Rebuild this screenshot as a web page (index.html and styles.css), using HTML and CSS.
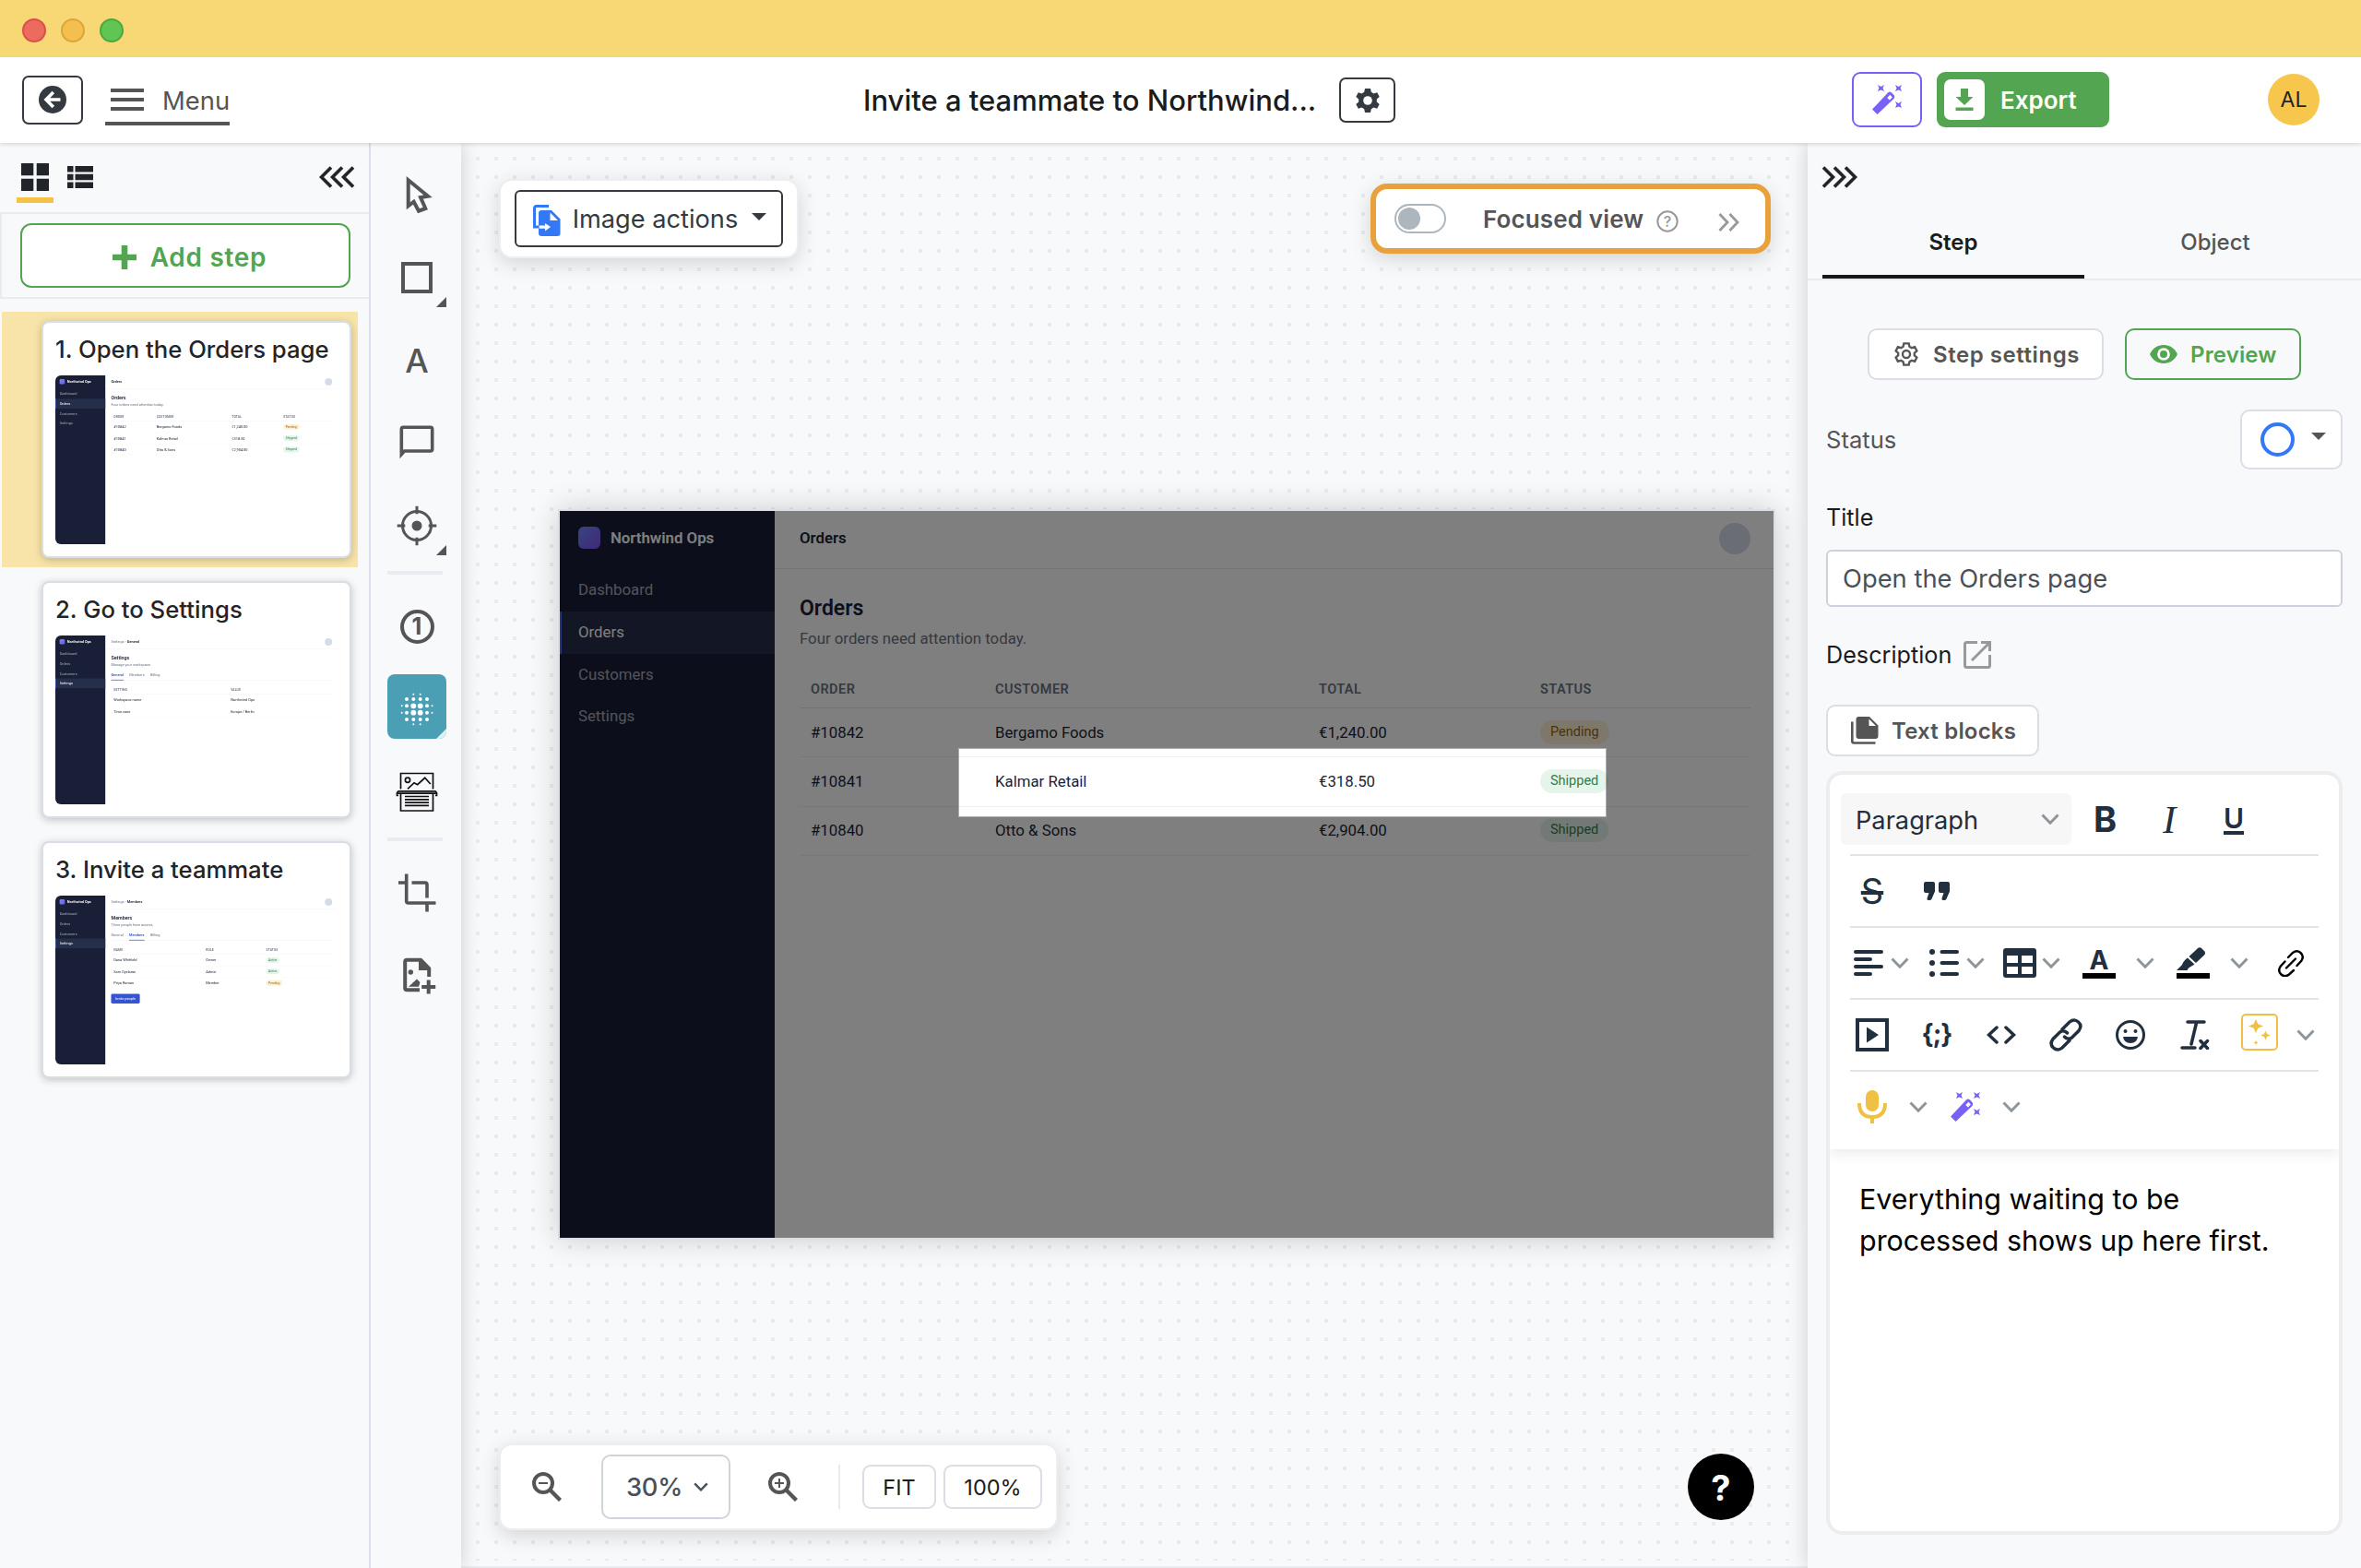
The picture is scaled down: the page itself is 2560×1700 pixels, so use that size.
FILE: index.html
```html
<!DOCTYPE html>
<html lang="en">
<head>
<meta charset="utf-8">
<title>Invite a teammate to Northwind</title>
<link rel="stylesheet" href="styles.css">
</head>
<body>
<svg width="0" height="0" class="defs">
  <symbol id="chev" viewBox="0 0 20 12"><path d="M1.500 1.500 10 10.200 18.500 1.500" fill="none" stroke="currentColor" stroke-width="3"/></symbol>
  <symbol id="wand" viewBox="0 0 32 32"><path d="M0 26.500 17 8.500Q19 6.500 21 8.500L23.500 11Q25 13 23.500 15L5.500 32z" fill="currentColor"/><path d="m16.300 14 3-3.200 2.600 2.600-3 3.200z" fill="#fff"/><path d="m6 0 3.500 2L13 0l-1.500 3.500L13 7 9.500 5.500 6 7l1.500-3.500zM25 0l3.500 2L32 0l-1.500 3.500L32 7l-3.500-1.500L25 7l1.500-3.500zM25 18l3.500 2 3.500-2-1.500 3.500L32 25l-3.500-1.500L25 25l1.500-3.500z" fill="currentColor"/></symbol>
  <symbol id="gear" viewBox="0 0 26 28" overflow="visible"><path d="M10 1h6l.8 3.800 2.700 1.600 3.700-1.200 2.500 4.800-2.900 2.600v2.800l2.900 2.600-2.500 4.800-3.700-1.200-2.700 1.600L16 27h-6l-.8-3.800-2.700-1.600-3.700 1.200L.3 18l2.900-2.600v-2.800L.3 10l2.500-4.800 3.700 1.200 2.700-1.600z"/></symbol>
</svg>
<div class="titlebar"><i class="light red"></i><i class="light yellow"></i><i class="light green"></i></div>
<header class="header">
  <button class="back"><svg width="30" height="30" viewBox="0 0 30 30"><circle cx="15" cy="15" r="15" fill="#343a40"/><path d="M15.800 7 8 15l7.800 8M8.500 15H23.500" fill="none" stroke="#fff" stroke-width="3.600"/></svg></button>
  <div class="menu"><span class="burger"><i></i><i></i><i></i></span><span>Menu</span></div>
  <div class="doc"><h1>Invite a teammate to Northwind...</h1>
    <button class="docset"><svg width="26" height="28" fill="#343a40"><use href="#gear"/><circle cx="13" cy="14" r="4.800" fill="#fff"/></svg></button></div>
  <button class="magic"><svg width="32" height="32"><use href="#wand"/></svg></button>
  <button class="export"><span class="dl"><svg width="20" height="24" viewBox="0 0 20 24"><path d="M6 0h8v9h5.500L10 18 .5 9H6zM.5 20.500h19V24H.5z" fill="#54a551"/></svg></span><span>Export</span></button>
  <div class="avatar">AL</div>
</header>
<div class="body">
  <aside class="steps">
    <div class="views">
      <svg class="gridv" width="30" height="30" viewBox="0 0 30 30" fill="#212529"><path d="M0 0h13.300v13.300H0zM16.700 0H30v13.300H16.700zM0 16.700h13.300V30H0zM16.700 16.700H30V30H16.700z"/></svg>
      <svg class="listv" width="28" height="24" viewBox="0 0 28 24" fill="#212529"><path d="M0 0h6.500v6.600H0zM8.500 0H28v6.600H8.500zM0 8.700h6.500v6.600H0zM8.500 8.700H28v6.600H8.500zM0 17.400h6.500V24H0zM8.500 17.400H28V24H8.500z"/></svg>
      <svg class="fold" width="40" height="24" viewBox="0 0 40 24" fill="none" stroke="#212529" stroke-width="3.600"><path d="M13 1.500 2.500 12 13 22.500M25 1.500 14.500 12 25 22.500M37 1.500 26.500 12 37 22.500"/></svg>
    </div>
    <div class="addwrap"><button class="add"><svg width="26" height="26" viewBox="0 0 26 26"><path d="M9.700 0h6.600v9.700H26v6.600h-9.700V26H9.700v-9.700H0V9.700h9.700z" fill="#54a551"/></svg><span>Add step</span></button></div>
    <div class="step on"><div class="card"><h2>1. Open the Orders page</h2><div class="thumb"><div class="app">
      <nav class="side"><div class="brand"><i></i><b>Northwind Ops</b></div><a>Dashboard</a><a class="cur">Orders</a><a>Customers</a><a>Settings</a></nav>
      <div class="main"><div class="bar"><b>Orders</b><i class="face"></i></div><div class="page"><h3>Orders</h3><p>Four orders need attention today.</p>
        <div class="tr th c4"><span>ORDER</span><span>CUSTOMER</span><span>TOTAL</span><span>STATUS</span></div>
        <div class="tr c4"><span>#10842</span><span>Bergamo Foods</span><span>€1,240.00</span><em class="pend">Pending</em></div>
        <div class="tr c4"><span>#10841</span><span>Kalmar Retail</span><span>€318.50</span><em>Shipped</em></div>
        <div class="tr c4"><span>#10840</span><span>Otto &amp; Sons</span><span>€2,904.00</span><em>Shipped</em></div>
      </div></div></div></div></div></div>
    <div class="step"><div class="card"><h2>2. Go to Settings</h2><div class="thumb"><div class="app">
      <nav class="side"><div class="brand"><i></i><b>Northwind Ops</b></div><a>Dashboard</a><a>Orders</a><a>Customers</a><a class="cur">Settings</a></nav>
      <div class="main"><div class="bar"><span>Settings › </span><b>General</b><i class="face"></i></div><div class="page"><h3>Settings</h3><p>Manage your workspace.</p>
        <div class="tabs"><b>General</b><span>Members</span><span>Billing</span></div>
        <div class="tr th c2"><span>SETTING</span><span>VALUE</span></div>
        <div class="tr c2"><span>Workspace name</span><span>Northwind Ops</span></div>
        <div class="tr c2"><span>Time zone</span><span>Europe / Berlin</span></div>
      </div></div></div></div></div></div>
    <div class="step"><div class="card"><h2>3. Invite a teammate</h2><div class="thumb"><div class="app">
      <nav class="side"><div class="brand"><i></i><b>Northwind Ops</b></div><a>Dashboard</a><a>Orders</a><a>Customers</a><a class="cur">Settings</a></nav>
      <div class="main"><div class="bar"><span>Settings › </span><b>Members</b><i class="face"></i></div><div class="page"><h3>Members</h3><p>Three people have access.</p>
        <div class="tabs"><span>General</span><b>Members</b><span>Billing</span></div>
        <div class="tr th c3"><span>NAME</span><span>ROLE</span><span>STATUS</span></div>
        <div class="tr c3"><span>Dana Whitfield</span><span>Owner</span><em>Active</em></div>
        <div class="tr c3"><span>Sam Oyelaran</span><span>Admin</span><em>Active</em></div>
        <div class="tr c3"><span>Priya Raman</span><span>Member</span><em class="pend">Pending</em></div>
        <button class="invite">Invite people</button>
      </div></div></div></div></div></div>
  </aside>
  <div class="tools">
    <div class="tool"><svg viewBox="0 0 48 48"><path d="M14.700 8.300 36 25.700l-8 1.300 5.300 12-7.300 2.700-5.300-10-6 4.600z"/></svg></div>
    <div class="tool more"><svg viewBox="0 0 48 48"><path d="M9 9h30v30H9z"/></svg></div>
    <div class="tool glyph">A</div>
    <div class="tool"><svg viewBox="0 0 48 48"><path d="M7.300 36.500V9.300a2 2 0 0 1 2-2H38.700a2 2 0 0 1 2 2V31a2 2 0 0 1-2 2H10.500z" stroke-width="3.600"/></svg></div>
    <div class="tool more"><svg viewBox="0 0 48 48"><circle cx="24" cy="24" r="15.500" stroke-width="3"/><circle cx="24" cy="24" r="5.500" class="solid"/><path d="M24 2.700v8.600M24 36.700v8.600M2.700 24h8.600M36.700 24h8.600" stroke-width="3"/></svg></div>
    <hr>
    <div class="tool one"><span>1</span></div>
    <div class="tool more blur"><svg viewBox="0 0 48 48"><g class="solid"><circle cx="20.300" cy="20.300" r="2.900"/><circle cx="27.700" cy="20.300" r="2.900"/><circle cx="20.300" cy="27.700" r="2.900"/><circle cx="27.700" cy="27.700" r="2.900"/><circle cx="13" cy="13" r="2"/><circle cx="20.300" cy="13" r="2"/><circle cx="27.700" cy="13" r="2"/><circle cx="35" cy="13" r="2"/><circle cx="13" cy="20.300" r="2"/><circle cx="35" cy="20.300" r="2"/><circle cx="13" cy="27.700" r="2"/><circle cx="35" cy="27.700" r="2"/><circle cx="13" cy="35" r="2"/><circle cx="20.300" cy="35" r="2"/><circle cx="27.700" cy="35" r="2"/><circle cx="35" cy="35" r="2"/><circle cx="20.300" cy="7.700" r="1"/><circle cx="27.700" cy="7.700" r="1"/><circle cx="20.300" cy="40.300" r="1"/><circle cx="27.700" cy="40.300" r="1"/><circle cx="7.700" cy="20.300" r="1"/><circle cx="7.700" cy="27.700" r="1"/><circle cx="40.500" cy="20.300" r="1"/><circle cx="40.500" cy="27.700" r="1"/></g></svg></div>
    <div class="tool scan"><svg viewBox="0 0 48 48"><path d="M6.500 21.500V4.500h35v17M14 21.300l7-6.600 3.700 2 8-7.400 6 6.700M4 28.500H2.500v-3l1.500-1.700h40l1.500 1.700v3H44M3.500 26.200h41M6.500 27v18h35V27M11 29.500h26M11 32.800h26M11 36.100h26M11 39.400h26"/><circle cx="14" cy="11.700" r="2.600"/></svg></div>
    <hr>
    <div class="tool"><svg viewBox="0 0 48 48"><path d="M12.700 3.500V33q0 2 2 2H44.500M4 13h8M18.500 13H33q2 0 2 2V29.500M35 35v9.500" stroke-width="3.600"/></svg></div>
    <div class="tool"><svg viewBox="0 0 48 48"><path d="M27 40.300H13.200q-2 0-2-2V9.700q0-2 2-2H28L37.200 17v9M36.700 29.500v15M29.200 37h15"/><path class="solid" d="M26 6h3l10 10.500V19H26zM15 36.700 24 28.500l3.500 3.500-1.500 4.700z"/><circle class="solid" cx="17.300" cy="21" r="2.700"/></svg></div>
  </div>
  <main class="canvas"><div class="dots"></div>
    <div class="imgact float"><button><svg width="30" height="34" viewBox="0 0 30 34"><path d="M17 1.500H3.500a2 2 0 0 0-2 2V24h5" fill="none" stroke="#3478f6" stroke-width="3"/><path d="M9 6h11l9.500 9.500V31a3 3 0 0 1-3 3H9a3 3 0 0 1-3-3V9a3 3 0 0 1 3-3z" fill="#3478f6"/><path d="M18.500 8.500V17H27zM6.500 22.500H13V20l6 4-6 4.500v-2.700H6.500z" fill="#fff"/></svg><span>Image actions</span><i class="caret"></i></button></div>
    <div class="focused"><i class="switch"></i><span>Focused view</span>
      <svg class="q" width="26" height="26" viewBox="0 0 26 26"><circle cx="13" cy="13" r="10.700" fill="none" stroke="#999" stroke-width="2"/><text x="13" y="18.800" text-anchor="middle">?</text></svg>
      <svg class="dbl" width="24" height="20" viewBox="0 0 24 20" fill="none" stroke="#999" stroke-width="2.800"><path d="M1.500 1 10 10l-8.500 9M12.500 1 21 10l-8.500 9"/></svg></div>
    <div class="shot"><div class="app">
      <nav class="side"><div class="brand"><i></i><b>Northwind Ops</b></div><a>Dashboard</a><a class="cur">Orders</a><a>Customers</a><a>Settings</a></nav>
      <div class="main"><div class="bar"><b>Orders</b><i class="face"></i></div><div class="page"><h3>Orders</h3><p>Four orders need attention today.</p>
        <div class="tr th c4"><span>ORDER</span><span>CUSTOMER</span><span>TOTAL</span><span>STATUS</span></div>
        <div class="tr c4"><span>#10842</span><span>Bergamo Foods</span><span>€1,240.00</span><em class="pend">Pending</em></div>
        <div class="tr c4"><span>#10841</span><span>Kalmar Retail</span><span>€318.50</span><em>Shipped</em></div>
        <div class="tr c4"><span>#10840</span><span>Otto &amp; Sons</span><span>€2,904.00</span><em>Shipped</em></div>
      </div></div></div><div class="spot"></div></div>
    <div class="zoombar float">
      <svg width="32" height="32" viewBox="0 0 32 32" fill="none" stroke="#555"><circle cx="12" cy="12" r="10" stroke-width="4"/><path d="m20 20 10.500 10.500" stroke-width="4.400"/><path d="M7 12h10" stroke-width="2"/></svg>
      <button class="pct"><span>30%</span><svg width="16" height="10"><use href="#chev"/></svg></button>
      <svg width="32" height="32" viewBox="0 0 32 32" fill="none" stroke="#555"><circle cx="12" cy="12" r="10" stroke-width="4"/><path d="m20 20 10.500 10.500" stroke-width="4.400"/><path d="M7 12h10M12 7v10" stroke-width="2"/></svg>
      <i class="sep"></i><button class="fit">FIT</button><button class="full">100%</button></div>
    <button class="help">?</button>
  </main>
  <aside class="props">
    <svg class="unfold" width="40" height="24" viewBox="0 0 40 24" fill="none" stroke="#212529" stroke-width="3.600"><path d="M2 1.500 12.500 12 2 22.500M14 1.500 24.500 12 14 22.500M26 1.500 36.500 12 26 22.500"/></svg>
    <div class="ptabs"><b>Step</b><span>Object</span></div>
    <div class="acts"><button class="set"><svg width="26" height="28" fill="none" stroke="#555" stroke-width="2.600" viewBox="-1.500 -1.500 29 31"><use href="#gear" width="26" height="28"/><circle cx="13" cy="14" r="4.500"/></svg><span>Step settings</span></button>
      <button class="prev"><svg width="30" height="20" viewBox="0 0 30 20"><path d="M15 0c6.800 0 12.500 4.100 15 10-2.500 5.900-8.200 10-15 10S2.500 15.900 0 10C2.500 4.100 8.200 0 15 0z" fill="#54a551"/><circle cx="15" cy="10" r="6.800" fill="#fff"/><circle cx="15" cy="10" r="4" fill="#54a551"/></svg><span>Preview</span></button></div>
    <div class="status"><span>Status</span><button><i class="ring"></i><i class="caret"></i></button></div>
    <div class="lab">Title</div>
    <div class="input">Open the Orders page</div>
    <div class="lab desc"><span>Description</span><svg width="30" height="30" viewBox="0 0 30 30" fill="none" stroke="#999" stroke-width="3"><path d="M15 1.500H3.500q-2 0-2 2v23q0 2 2 2h23q2 0 2-2V15M19 1.500h9.500V11M28 2 9 21"/></svg></div>
    <button class="blocks"><svg width="30" height="30" viewBox="0 0 30 30"><path d="M8.500 0H20l9.500 9.500V21a3 3 0 0 1-3 3h-18a3 3 0 0 1-3-3V3a3 3 0 0 1 3-3z" fill="#555"/><path d="M19.500 2.500v7.500H27z" fill="#fff"/><path d="M1.300 5.500v21q0 2 2 2H26.500" fill="none" stroke="#555" stroke-width="2.600"/></svg><span>Text blocks</span></button>
    <div class="editor">
      <div class="etools">
        <div class="row r1"><div class="para"><span>Paragraph</span><svg class="cv"><use href="#chev"/></svg></div><b class="eb">B</b><i class="ei">I</i><span class="eu">U</span></div>
        <div class="row r2"><span class="es">S</span><svg width="28" height="20" viewBox="0 0 28 20"><path d="M2 0h8q2 0 2 2v8.500L8.500 18.500Q7.800 20 6.300 20H5q-2 0-1.500-2l2-6H2q-2 0-2-2V2q0-2 2-2zM18 0h8q2 0 2 2v8.500l-3.500 8q-.7 1.500-2.200 1.500H21q-2 0-1.500-2l2-6H18q-2 0-2-2V2q0-2 2-2z" fill="#222f3e"/></svg></div>
        <div class="row r3">
          <svg width="32" height="28" viewBox="0 0 32 28"><path d="M2 2h28M2 10h16M2 18h28M2 26h16"/></svg><svg class="cv"><use href="#chev"/></svg>
          <svg class="m1" width="32" height="30" viewBox="0 0 32 30"><path d="M13.500 3H30M13.500 15H30M13.500 27H30"/><circle class="f" cx="3" cy="3" r="3"/><circle class="f" cx="3" cy="15" r="3"/><circle class="f" cx="3" cy="27" r="3"/></svg><svg class="cv"><use href="#chev"/></svg>
          <svg class="m2" width="36" height="32" viewBox="0 0 36 32"><path class="f" fill-rule="evenodd" d="M3 0h30a3 3 0 0 1 3 3v26a3 3 0 0 1-3 3H3a3 3 0 0 1-3-3V3a3 3 0 0 1 3-3zM4 8v8h12V8zm16 0v8h12V8zM4 20v8h12v-8zm16 0v8h12v-8z"/></svg><svg class="cv"><use href="#chev"/></svg>
          <span class="ea">A</span><svg class="cv m3"><use href="#chev"/></svg>
          <svg class="m4" width="36" height="34" viewBox="0 0 36 34"><path class="f" d="M20.500 3.500 22.500 1.500Q25-1 27.500 1.500L30 4q2 2.200 0 4.500L21 17l-7.500-7zM12 11.500l7.500 7L13 22.500l-1.500 2.500H0L6 19q1.500-4.500 6-7.500z"/><path d="M0 28h36v6H0z" fill="#000"/></svg><svg class="cv m3"><use href="#chev"/></svg>
          <svg class="m5" width="28" height="29" viewBox="0 0 28 29"><path d="m11 8 5-5q4.500-3.500 8.500 0t1 8.500l-5 5.500M17 22l-5 4.500q-4.500 3.500-8.500 0T2.500 18L7.500 12.500M9 19.500 19 9.500"/></svg>
        </div>
        <div class="row r4">
          <svg class="play" width="36" height="36" viewBox="0 0 36 36"><path d="M2 2h32v32H2z"/><path class="f" d="M12 9.500 25 18 12 26.500z"/></svg>
          <span class="code">{;}</span>
          <svg width="32" height="20" viewBox="0 0 32 20"><path d="M11 2 2.500 10 11 18M21 2l8.500 8L21 18"/></svg>
          <svg width="36" height="36" viewBox="0 0 36 36"><path d="m14 12 8-8q5-4 9.500 0t.5 9.500l-7.500 7.500q-4.500 3-8-1M22 24l-8 8q-5 4-9.500 0T4 22.500L11.500 15q4.500-3 8 1"/></svg>
          <svg width="32" height="32" viewBox="0 0 32 32"><circle cx="16" cy="16" r="14.500" fill="none" stroke="#222f3e" stroke-width="3"/><path class="f" d="M8 18h16q-1 7-8 7t-8-7z"/><circle class="f" cx="10.500" cy="12" r="2"/><circle class="f" cx="21.500" cy="12" r="2"/></svg>
          <svg width="32" height="32" viewBox="0 0 32 32"><path d="M8 2h18M17.500 3 12 26M2 30h14M22 22.500l7.500 8M29.500 22.500l-7.500 8"/></svg>
          <svg class="m6" width="40" height="40" viewBox="0 0 40 40"><rect x="1" y="1" width="38" height="38" rx="4" fill="none" stroke="#f0c043" stroke-width="2"/><path d="m16 6 2.300 5.300L24 13.500l-5.700 2.200L16 21l-2.300-5.300L8 13.500l5.700-2.200zM26.500 18.500l1.500 3.500 3.700 1.500-3.700 1.500-1.500 3.500L25 25l-3.700-1.500L25 22zM16 29l.8 1.700 1.700.8-1.700.8L16 34l-.8-1.700-1.700-.8 1.700-.8z"/></svg><svg class="cv"><use href="#chev"/></svg>
        </div>
        <div class="row r5"><svg class="mic" width="32" height="36" viewBox="0 0 32 36"><rect x="9" y="0" width="14" height="23" rx="7"/><path d="M2 14q0 15 14 15t14-15M16 29v7"/></svg><svg class="cv"><use href="#chev"/></svg><svg class="pw" width="32" height="32"><use href="#wand"/></svg><svg class="cv"><use href="#chev"/></svg></div>
      </div>
      <div class="etext">Everything waiting to be<br>processed shows up here first.</div>
    </div>
  </aside>
</div>
</body>
</html>
```
FILE: styles.css
```css
* { box-sizing: border-box; }
body { margin: 0; width: 2560px; height: 1700px; overflow: hidden; display: flex; flex-direction: column; font-family: Inter, sans-serif; background: #f8f9fb; color: #212529; }
button { font: inherit; color: inherit; margin: 0; padding: 0; background: #fff; display: flex; align-items: center; }
h1, h2, h3, p { margin: 0; }
svg { display: block; flex: none; }
.defs { position: absolute; }

/* Window chrome and header */
.titlebar { height: 62px; flex: none; background: #f8d775; display: flex; gap: 16px; padding: 20px 24px; }
.light { width: 26px; height: 26px; border-radius: 50%; border: 2px solid; }
.red { background: #ed6a5e; border-color: #d8504a; }
.yellow { background: #f5bf4f; border-color: #dba53c; }
.green { background: #61c554; border-color: #4aa83e; }

.header { height: 93px; flex: none; background: #fff; box-shadow: 0 2px 4px rgba(0,0,0,.13); position: relative; z-index: 5; display: flex; align-items: flex-start; padding-left: 24px; }
.back { width: 66px; height: 53px; margin-top: 20px; border: 2px solid #343a40; border-radius: 7px; justify-content: center; padding-bottom: 1px; }
.menu { margin: 22px 0 0 24px; width: 135px; height: 52px; border-bottom: 4px solid #555; display: flex; align-items: center; padding: 0 0 0 6px; font-size: 27.400px; color: #555; }
.menu > span:last-child { margin: 2px 0 0 20px; }
.burger { display: flex; flex-direction: column; gap: 6px; margin-top: -1px; }
.burger i { width: 36px; height: 4px; background: #555; }
.doc { width: 577px; margin: 22px 0 0 687px; display: flex; justify-content: space-between; }
.doc h1 { font-size: 31px; font-weight: 500; line-height: 49px; color: #1b1b1b; white-space: nowrap; }
.docset { width: 61px; height: 49px; border: 2px solid #343a40; border-radius: 7px; justify-content: center; }
.magic { margin: 16px 0 0 495px; width: 76px; height: 60px; border: 2px solid #7960f6; border-radius: 9px; justify-content: center; color: #7960f6; }
.export { margin: 16px 0 0 16px; width: 187px; height: 60px; border: 0; border-radius: 9px; background: #54a551; color: #fff; padding-left: 8px; font-size: 26px; font-weight: 600; }
.export span:last-child { margin-top: 1px; }
.dl { width: 44px; height: 44px; border-radius: 7px; background: #fff; display: flex; align-items: center; justify-content: center; margin-right: 17px; }
.avatar { margin: 18px 0 0 172px; width: 56px; height: 56px; border-radius: 50%; background: #f7c64d; text-align: center; font-size: 23px; line-height: 57px; }

/* Step list */
.body { flex: 1; display: flex; min-height: 0; }
.steps { width: 402px; flex: none; border-right: 2px solid #dcdfe8; }
.views { height: 77px; border-bottom: 2px solid #e9ebee; display: flex; padding-left: 18px; }
.gridv { box-sizing: content-box; padding: 22px 5px 7px; border-bottom: 6px solid #f5c344; height: 30px; }
.listv { margin: 25px 0 0 15px; }
.fold { margin: 25px 0 0 245px; }
.addwrap { height: 92px; border: solid #e9ebee; border-width: 0 0 2px 2px; padding: 10px 20px; }
.add { width: 358px; height: 70px; border: 2px solid #54a551; border-radius: 12px; color: #54a551; font-size: 28px; font-weight: 600; letter-spacing: .700px; justify-content: center; gap: 15px; padding: 4px 0 0 9px; }
.step { margin: 0 0 5px 2px; width: 386px; height: 277px; padding: 10px 7px 10px 43px; }
.step.on { background: #f8e4a9; margin-top: 14px; }
.card { height: 257px; background: #fff; border: 2px solid #dadde3; border-radius: 8px; padding: 10px 13px; box-shadow: 0 2px 8px rgba(0,0,0,.22); }
.card h2 { font-size: 25.700px; font-weight: 500; line-height: 38px; margin-bottom: 9px; white-space: nowrap; }
.thumb { width: 306px; height: 183px; overflow: hidden; border-radius: 6px; }
.thumb .app { transform: scale(.2325); transform-origin: 0 0; }

/* Drawing tools */
.tools { width: 98px; flex: none; position: relative; z-index: 2; background: #f8f9fb; box-shadow: 0 0 20px rgba(0,0,0,.18); clip-path: inset(0 -30px 0 0); padding: 18px 0 0 18px; display: flex; flex-direction: column; gap: 19.670px; }
.tools hr { width: 60px; height: 4px; border: 0; background: #e9ebf0; margin: -2px 0; flex: none; }
.tool { width: 64px; height: 70px; flex: none; padding-top: 6px; display: flex; align-items: center; justify-content: center; position: relative; color: #555; }
.tool svg { width: 48px; height: 48px; fill: none; stroke: #555; stroke-width: 4; }
.tool .solid { fill: #555; stroke: none; }
.more::after { content: ""; position: absolute; right: 0; bottom: 0; border-bottom: 11px solid #555; border-left: 11px solid transparent; }
.glyph { font-size: 36px; font-weight: 500; padding-top: 8px; }
.one { padding-top: 7px; }
.one span { width: 37px; height: 37px; border: 4px solid #555; border-radius: 50%; font-size: 25px; line-height: 29px; font-weight: 700; text-align: center; }
.blur { background: #4a9fb5; border-radius: 8px; overflow: hidden; }
.blur .solid { fill: #fff; }
.blur::after { border-bottom-color: #dff0f5; }
.scan svg { stroke: #111; stroke-width: 1.700; }

/* Canvas */
.canvas { width: 1460px; flex: none; position: relative; border-bottom: 2px solid #e9ebee; }
.dots { position: absolute; inset: 0 10px 6px 0; background: repeating-linear-gradient(90deg, transparent 0 16px, #e9ebed 16px 20px); mask: repeating-linear-gradient(180deg, transparent 0 15px, #000 15px 19px, transparent 19px 20px); }
.float { background: #fff; border: 2px solid #edeef2; border-radius: 14px; box-shadow: 0 6px 22px rgba(0,0,0,.15); position: absolute; }
.imgact { left: 41px; top: 39px; padding: 10px 15px; }
.imgact button { width: 291px; height: 62px; border: 2px solid #343a40; border-radius: 6px; padding-left: 18px; font-size: 27.200px; color: #343a40; }
.imgact svg { margin-top: 4px; }
.imgact span { margin-left: 12px; width: 181px; white-space: nowrap; }
.caret { border: 8px solid transparent; border-top-color: #343a40; border-bottom: 0; }
.imgact .caret { margin: -4px 0 0 14px; }
.focused { position: absolute; left: 986px; top: 44px; width: 434px; height: 76px; border: 6px solid #e9a13b; border-radius: 18px; background: #fff; box-shadow: 0 6px 22px rgba(0,0,0,.15); display: flex; align-items: center; padding-left: 20px; font-size: 26px; font-weight: 600; color: #555; }
.switch { width: 56px; height: 32px; border: 2px solid #adb5bd; border-radius: 16px; padding: 2px; }
.switch::before { content: ""; display: block; width: 24px; height: 24px; border-radius: 50%; background: #adb5bd; }
.focused span { margin: 1px 0 0 40px; width: 174px; white-space: nowrap; letter-spacing: .130px; }
.q { margin: 6px 0 0 13px; }
.q text { font: 500 16px Inter, sans-serif; fill: #999; }
.dbl { margin: 8px 0 0 42px; }
.shot { position: absolute; left: 105px; top: 397px; width: 1320px; height: 792px; border: 2px solid #dcdfe6; box-shadow: 0 0 30px rgba(0,0,0,.18); }
.spot { position: absolute; left: 432px; top: 257px; width: 703px; height: 75px; border: 1.500px solid rgba(120,120,120,.6); }
.shot::after { content: ""; position: absolute; inset: 0; background: rgba(0,0,0,.5); clip-path: polygon(evenodd, 0 0, 1316px 0, 1316px 788px, 0 788px, 0 0, 432px 257px, 1135px 257px, 1135px 332px, 432px 332px, 432px 257px); }

/* Captured application screen, also used for the step thumbnails */
.app { width: 1316px; height: 788px; background: #fff; display: flex; font: 16.800px/24px Roboto, sans-serif; color: #1a1f36; }
.side { width: 233px; flex: none; background: #191f37; color: #a3a9b8; }
.brand { height: 58px; margin-bottom: 5px; padding-left: 20px; display: flex; align-items: center; gap: 11px; color: #fff; }
.brand i { width: 24px; height: 24px; border-radius: 6px; background: linear-gradient(135deg, #6c8cff, #8250f0); }
.app b { font-weight: 600; }
.side a { display: block; height: 45.800px; line-height: 45px; padding-left: 20px; }
.side a.cur { background: #262f4a; color: #fff; border-left: 2px solid #4a6cf7; padding-left: 18px; }
.main { flex: 1; }
.bar { height: 63px; border-bottom: 1.500px solid #e3e6ee; padding: 0 25px 4px 27px; display: flex; align-items: center; white-space: pre; }
.bar span { color: #6b7280; }
.face { width: 34px; height: 34px; border-radius: 50%; background: #d5dbe9; margin: 2px 0 0 auto; }
.page { padding: 27px 25px 0 27px; }
.page h3 { font-size: 23px; line-height: 32px; font-weight: 600; }
.page p { margin-top: 4px; color: #6b7280; }
.tr { display: grid; align-items: center; height: 53.400px; border-bottom: 1.500px solid #eef0f5; padding: 0 0 1px 12px; }
.page p + .tr { margin-top: 23px; }
.th { height: 41px; font-size: 14.500px; font-weight: 600; color: #6b7280; letter-spacing: .450px; border-color: #e3e6ee; padding: 1px 0 0 12px; }
.c4 { grid-template-columns: 200px 351px 240px 1fr; }
.c2 { grid-template-columns: 546px 1fr; }
.c3 { grid-template-columns: 430px 281px 1fr; }
.tr em { font-style: normal; font-size: 14.500px; line-height: 26px; padding: 0 11px; border-radius: 13px; justify-self: start; background: #e6f5ec; color: #2f7d4f; }
.tr em.pend { background: #fdf0d5; color: #9a6412; }
.tabs { height: 46px; margin: 13px 0 25px; border-bottom: 1.500px solid #e3e6ee; display: flex; gap: 27px; color: #6b7280; line-height: 44px; }
.tabs b { color: #3454d1; border-bottom: 3px solid #3454d1; height: 46px; }
.invite { margin-top: 23px; width: 134px; height: 45px; border: 0; border-radius: 6px; background: #3454d1; color: #fff; justify-content: center; }

.zoombar { left: 41px; top: 1410px; width: 606px; height: 94px; display: flex; align-items: center; padding-left: 34px; }
.pct { width: 140px; height: 70px; margin: 0 41px 0 43px; border: 2px solid #ced4da; border-radius: 10px; padding-left: 23px; font-size: 27.300px; font-weight: 500; color: #495057; }
.pct span { width: 75px; padding-top: 1px; margin-left: -5px; margin-right: 5px; letter-spacing: -.200px; }
.sep { width: 2px; height: 48px; background: #e9ebee; margin: 0 24px 0 44px; }
.fit, .full { height: 48px; width: 80px; border: 2px solid #dcdde5; border-radius: 9px; justify-content: center; font-size: 23.500px; color: #1b1b1b; margin-right: 8px; padding-top: 1px; }
.full { width: 107px; margin: 0; }
.help { position: absolute; left: 1330px; top: 1421px; width: 72px; height: 72px; border: 0; border-radius: 50%; background: #000; color: #fff; font-size: 38px; font-weight: 700; justify-content: center; padding-top: 1px; }

/* Properties panel */
.props { flex: 1; position: relative; z-index: 2; background: #f8f9fb; box-shadow: 0 0 20px rgba(0,0,0,.18); }
.unfold { margin: 25px 0 0 15px; }
.ptabs { margin-top: 19px; height: 81px; border-bottom: 2px solid #e9ebee; display: flex; padding-left: 16px; font-size: 24px; line-height: 80px; text-align: center; color: #555; }
.ptabs > * { width: 284px; font-weight: 500; }
.ptabs b { color: #1b1b1b; font-weight: 600; border-bottom: 4px solid #17181a; height: 79px; }
.acts { margin: 52px 0 0 65px; display: flex; gap: 23px; font-size: 24px; font-weight: 600; color: #555; }
.acts button, .blocks { height: 56px; border: 2px solid #dcdde5; border-radius: 10px; white-space: nowrap; }
.set { width: 256px; padding-left: 27px; }
.set span { margin-left: 16px; letter-spacing: .550px; }
.acts .prev { width: 191px; padding-left: 25px; border-color: #54a551; color: #54a551; background: none; }
.prev span { margin-left: 14px; letter-spacing: .150px; }
.status { margin: 32px 20px 0 20px; display: flex; align-items: center; justify-content: space-between; font-size: 25.600px; color: #555; }
.status button { width: 111px; height: 65px; border: 2px solid #dcdde5; border-radius: 10px; padding-left: 20px; }
.ring { width: 37px; height: 37px; border: 4px solid #3478f6; border-radius: 50%; }
.status .caret { margin: -7px 0 0 18px; border-top-color: #555; }
.lab { font-size: 25.200px; line-height: 36px; margin: 34px 0 0 20px; color: #1b1b1b; }
.input { width: 560px; height: 62px; margin: 17px 0 0 20px; border: 2px solid #ced0da; border-radius: 6px; background: #fff; padding-left: 16px; font-size: 27.350px; line-height: 59px; color: #495057; }
.desc { display: flex; align-items: center; gap: 13px; margin-top: 34px; }
.blocks { width: 231px; margin: 36px 0 0 20px; padding-left: 25px; font-size: 24px; font-weight: 600; color: #555; }
.blocks span { margin-left: 14px; letter-spacing: .200px; }

/* Rich-text editor */
.editor { width: 560px; height: 828px; margin: 16px 0 0 20px; border: 4px solid #ededef; border-radius: 18px; background: #fff; overflow: hidden; }
.etools { height: 406px; background: #fff; box-shadow: 0 4px 14px rgba(34,47,62,.1); padding: 8px 22px 0; color: #222f3e; }
.row { height: 78px; border-bottom: 2px solid #e3e3e3; display: flex; align-items: center; }
.row svg:not(.cv) path { stroke: #222f3e; stroke-width: 4; fill: none; stroke-linecap: round; }
.row svg:not(.cv) .f, .row.r2 svg:not(.cv) path { fill: #222f3e; stroke: none; }
.row .cv { width: 20px; height: 12px; color: #8e959b; }
.r1 { height: 80px; padding: 2px 0 0; }
.para { width: 250px; height: 56px; margin-left: -10px; background: #f7f7f7; border-radius: 6px; display: flex; align-items: center; padding: 0 13px 0 16px; font-size: 27.200px; justify-content: space-between; }
.para span { padding-top: 2px; }
.eb { font-size: 38px; font-weight: 700; margin-left: 24px; width: 75px; }
.ei { font: italic 43px "Liberation Serif", serif; width: 66px; }
.eu { font-size: 30px; font-weight: 600; line-height: 28px; border-bottom: 4px solid; width: 22px; text-align: center; margin-top: 1px; }
.es { width: 32px; margin: 0 40px 0 8px; text-align: center; font-size: 38px; font-weight: 400; text-decoration: line-through; text-decoration-thickness: 4px; }
.r3 { padding-left: 4px; }
.r3 svg + .cv { margin-left: 8px; }
.r3 .m1 { margin-left: 22px; }
.r3 .m2 { margin-left: 20px; }
.r3 .m2 + .cv { margin-left: 6px; }
.ea { margin-left: 24px; width: 36px; height: 34px; line-height: 28px; border-bottom: 6px solid #000; text-align: center; font-size: 28px; font-weight: 700; }
.r3 .cv.m3 { margin-left: 22px; }
.m4 { margin-left: 24px; }
.row svg.m4:not(.cv) path[fill] { fill: #000; stroke: none; }
.m5 { margin-left: 32px; }
.row svg.m5:not(.cv) path { stroke: #000; stroke-width: 2.400; }
.r4 { padding-left: 6px; }
.row.r4 svg:not(.cv) path:not(.f) { stroke-width: 3.500; }
.row.r4 svg.play:not(.cv) path:not(.f) { stroke-width: 4; stroke-linecap: butt; }
.r4 > :nth-child(2) { margin: 0 37px 0 35px; }
.r4 > :nth-child(4) { margin: 0 36px; }
.r4 > :nth-child(6) { margin: 0 34px 0 38px; }
.code { font-size: 28px; font-weight: 700; width: 34px; text-align: center; letter-spacing: -1px; padding-bottom: 2px; }
.m6 { margin-top: -6px; }
.row.r4 svg.m6:not(.cv) path:not(.f) { fill: #f0c043; stroke: none; }
.r4 .cv { margin-left: 20px; }
.r5 { border: 0; padding: 0 0 2px 8px; }
.r5 .cv { margin-left: 24px; }
.mic rect { fill: #f0c043; }
.row.r5 svg.mic:not(.cv) path { stroke: #f0c043; stroke-linecap: butt; }
.pw { margin-left: 25px; color: #7960f6; }
.etext { padding: 32px 32px; font-size: 30.450px; line-height: 45px; color: #000; white-space: nowrap; }
```
